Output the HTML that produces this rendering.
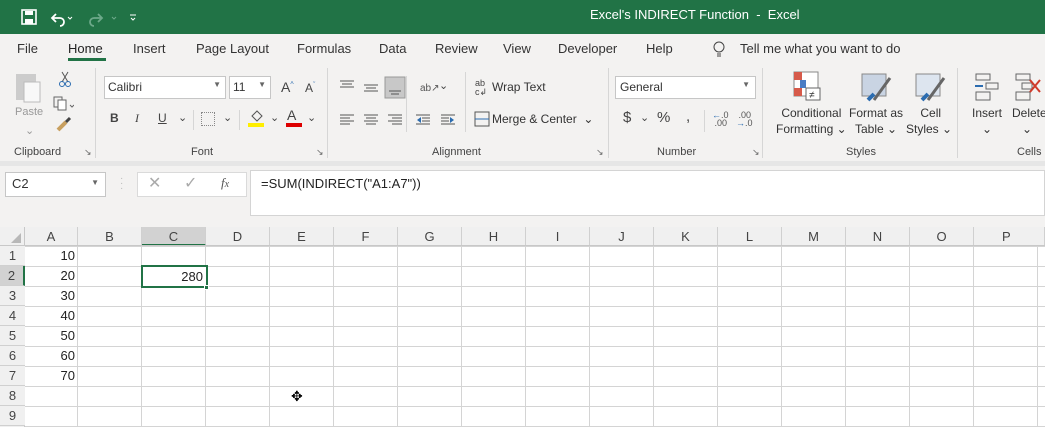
<!DOCTYPE html><html><head><meta charset="utf-8"><style>
*{margin:0;padding:0;box-sizing:border-box}
body{width:1045px;height:427px;overflow:hidden;background:#fff;font-family:"Segoe UI","Liberation Sans",sans-serif;position:relative;color:#333}
.a{position:absolute;white-space:nowrap}
.t{font-size:13px;color:#333}
.s{font-size:11px;color:#444}
.sep{position:absolute;width:1px;background:#d6d6d6}
.ch{position:absolute;top:227px;height:19px;font-size:13px;color:#444;text-align:center;line-height:19px;border-right:1px solid #d0d0d0;background:#f0f0f0}
.rh{position:absolute;left:0;width:25px;height:20px;font-size:13px;color:#444;text-align:center;line-height:20px;background:#f0f0f0;border-bottom:1px solid #d0d0d0}
.v{position:absolute;left:25px;width:53px;text-align:right;padding-right:3px;font-size:13px;color:#222;line-height:20px}
</style></head><body>
<div class="a" style="left:0;top:0;width:1045px;height:34px;background:#217346"></div>
<svg class="a" style="left:20px;top:9px" width="120" height="18"><rect x="2" y="1" width="14" height="14" fill="none" stroke="#fff" stroke-width="1.6"/><rect x="5" y="2" width="8" height="4" fill="#fff"/><rect x="5" y="10" width="8" height="5" fill="#fff"/><path d="M36 5 l-4 4 4 4 M32 9 h8 a4 4 0 0 1 0 8" fill="none" stroke="#fff" stroke-width="1.8"/><path d="M48 8 l2 2 2-2" stroke="#fff" fill="none"/><path d="M78 5 l4 4 -4 4 M82 9 h-8 a4 4 0 0 0 0 8" fill="none" stroke="#6da98a" stroke-width="1.8"/><path d="M92 8 l2 2 2-2" stroke="#6da98a" fill="none"/><path d="M110 6 h6 M111 9 l2 2 2-2" stroke="#fff" fill="none"/></svg>
<div class="a" style="left:590px;top:7px;font-size:13px;color:#fff">Excel's INDIRECT Function &nbsp;-&nbsp; Excel</div>
<div class="a" style="left:0;top:34px;width:1045px;height:127px;background:#f3f2f1"></div>
<div class="a" style="left:0;top:161px;width:1045px;height:5px;background:#e6e6e6"></div>
<div class="a t" style="left:17px;top:41px">File</div>
<div class="a t" style="left:68px;top:41px;color:#222">Home</div>
<div class="a" style="left:68px;top:58px;width:38px;height:3px;background:#217346"></div>
<div class="a t" style="left:133px;top:41px">Insert</div>
<div class="a t" style="left:196px;top:41px">Page Layout</div>
<div class="a t" style="left:297px;top:41px">Formulas</div>
<div class="a t" style="left:379px;top:41px">Data</div>
<div class="a t" style="left:435px;top:41px">Review</div>
<div class="a t" style="left:503px;top:41px">View</div>
<div class="a t" style="left:558px;top:41px">Developer</div>
<div class="a t" style="left:646px;top:41px">Help</div>
<svg class="a" style="left:712px;top:41px" width="14" height="18"><circle cx="7" cy="6" r="5" fill="none" stroke="#444"/><path d="M5 13h4M5 15h4" stroke="#444"/></svg>
<div class="a t" style="left:740px;top:41px">Tell me what you want to do</div>
<svg class="a" style="left:14px;top:70px" width="60" height="70"><rect x="2" y="4" width="20" height="26" fill="#ccc"/><rect x="10" y="12" width="16" height="20" fill="#f8f8f8" stroke="#bbb"/><path d="M48 2 l6 10 M54 2 l-6 10" stroke="#555"/><circle cx="48" cy="14" r="2.5" fill="none" stroke="#2b6cb0"/><circle cx="54" cy="14" r="2.5" fill="none" stroke="#2b6cb0"/><rect x="40" y="27" width="8" height="10" fill="none" stroke="#666"/><rect x="44" y="30" width="8" height="10" fill="#fff" stroke="#666"/><path d="M56 35 l2 2 2-2" stroke="#666" fill="none"/><path d="M44 60 l8-8" stroke="#c8a060" stroke-width="4"/><path d="M52 52 l4-4" stroke="#444" stroke-width="3"/></svg>
<div class="a s" style="left:15px;top:106px;color:#999">Paste</div>
<div class="a s" style="left:25px;top:124px;color:#999">⌄</div>
<div class="a s" style="left:14px;top:146px">Clipboard</div>
<div class="a" style="left:84px;top:147px;font-size:9px;color:#666">↘</div>
<div class="sep" style="left:95px;top:68px;height:90px"></div>
<div class="a" style="left:104px;top:76px;width:122px;height:23px;background:#fff;border:1px solid #c6c6c6;font-size:12px;padding:3px 3px">Calibri<span style="position:absolute;right:4px;font-size:8px;color:#666">▼</span></div>
<div class="a" style="left:229px;top:76px;width:42px;height:23px;background:#fff;border:1px solid #c6c6c6;font-size:12px;padding:3px 3px">11<span style="position:absolute;right:4px;font-size:8px;color:#666">▼</span></div>
<div class="a" style="left:281px;top:79px;font-size:14px;color:#444">A<sup style="font-size:7px;color:#2b6cb0">^</sup></div>
<div class="a" style="left:305px;top:81px;font-size:12px;color:#444">A<sup style="font-size:7px;color:#2b6cb0">ˇ</sup></div>
<div class="a" style="left:110px;top:111px;font-size:12px;font-weight:bold;color:#444">B</div>
<div class="a" style="left:135px;top:111px;font-size:12px;font-style:italic;color:#444;font-family:'Liberation Serif',serif">I</div>
<div class="a" style="left:158px;top:111px;font-size:12px;text-decoration:underline;color:#444">U</div>
<div class="a s" style="left:178px;top:111px">⌄</div>
<div class="sep" style="left:193px;top:110px;height:20px"></div>
<div class="a" style="left:201px;top:112px;width:14px;height:14px;border:1px dotted #888"></div>
<div class="a s" style="left:223px;top:111px">⌄</div>
<div class="sep" style="left:239px;top:110px;height:20px"></div>
<div class="a" style="left:248px;top:123px;width:16px;height:4px;background:#ffee00"></div>
<svg class="a" style="left:249px;top:109px" width="16" height="14"><path d="M3 7 l5-5 5 5 -5 5z" fill="none" stroke="#555"/></svg>
<div class="a s" style="left:270px;top:111px">⌄</div>
<div class="a" style="left:287px;top:107px;font-size:14px;color:#444">A</div>
<div class="a" style="left:286px;top:123px;width:16px;height:4px;background:#d00"></div>
<div class="a s" style="left:307px;top:111px">⌄</div>
<div class="a s" style="left:191px;top:146px">Font</div>
<div class="a" style="left:316px;top:147px;font-size:9px;color:#666">↘</div>
<div class="sep" style="left:327px;top:68px;height:90px"></div>
<svg class="a" style="left:338px;top:76px" width="270" height="55"><g stroke="#555"><path d="M2 5h14M4 8h10M2 11h14"/><path d="M26 9h14M28 12h10M26 15h14"/><rect x="47" y="1" width="20" height="21" fill="#c8c8c8" stroke="#999"/><path d="M51 15h12M53 18h8"/><path d="M2 39h14M2 42h10M2 45h14M2 48h10"/><path d="M26 39h14M28 42h10M26 45h14M28 48h10"/><path d="M50 39h14M54 42h10M50 45h14M54 48h10"/><path d="M78 39h14M84 42h8M84 45h8M78 48h14"/><path d="M103 39h14M103 42h8M103 45h8M103 48h14"/></g><path d="M79 44l4-3v6z" fill="#2b6cb0"/><path d="M116 44l-4-3v6z" fill="#2b6cb0"/><text x="82" y="15" font-size="10" fill="#555" font-family="Liberation Sans">ab↗</text><rect x="137" y="36" width="14" height="14" fill="none" stroke="#555"/><path d="M137 43h14" stroke="#2b6cb0"/><text x="137" y="10" font-size="9" fill="#444" font-family="Liberation Sans">ab</text><text x="137" y="19" font-size="9" fill="#444" font-family="Liberation Sans">c↲</text></svg>
<div class="sep" style="left:406px;top:76px;height:56px"></div>
<div class="a s" style="left:439px;top:79px">⌄</div>
<div class="sep" style="left:465px;top:72px;height:60px"></div>
<div class="a" style="left:492px;top:80px;font-size:12px;color:#333">Wrap Text</div>
<div class="a" style="left:492px;top:112px;font-size:12px;color:#333">Merge &amp; Center &nbsp;⌄</div>
<div class="a s" style="left:432px;top:146px">Alignment</div>
<div class="a" style="left:596px;top:147px;font-size:9px;color:#666">↘</div>
<div class="sep" style="left:608px;top:68px;height:90px"></div>
<div class="a" style="left:615px;top:76px;width:141px;height:23px;background:#fff;border:1px solid #c6c6c6;font-size:12px;padding:3px 4px">General<span style="position:absolute;right:5px;font-size:8px;color:#666">▼</span></div>
<div class="a" style="left:623px;top:109px;font-size:15px;color:#444">$</div>
<div class="a s" style="left:640px;top:111px">⌄</div>
<div class="a" style="left:657px;top:109px;font-size:15px;color:#444">%</div>
<div class="a" style="left:686px;top:108px;font-size:15px;color:#444">,</div>
<div class="sep" style="left:704px;top:110px;height:22px"></div>
<div class="a" style="left:712px;top:111px;font-size:9px;line-height:8px;color:#555"><span style="color:#2b6cb0">←</span>.0<br>&nbsp;.00</div>
<div class="a" style="left:736px;top:111px;font-size:9px;line-height:8px;color:#555">&nbsp;.00<br><span style="color:#2b6cb0">→</span>.0</div>
<div class="a s" style="left:657px;top:146px">Number</div>
<div class="a" style="left:752px;top:147px;font-size:9px;color:#666">↘</div>
<div class="sep" style="left:762px;top:68px;height:90px"></div>
<svg class="a" style="left:790px;top:70px" width="160" height="36"><rect x="4" y="2" width="24" height="24" fill="#fff" stroke="#888"/><rect x="4" y="2" width="8" height="8" fill="#d65a4a"/><rect x="10" y="10" width="6" height="8" fill="#4a7cc4"/><rect x="4" y="18" width="8" height="8" fill="#d65a4a"/><rect x="16" y="18" width="14" height="12" fill="#fff" stroke="#666"/><text x="19" y="28" font-size="10" fill="#333">≠</text><rect x="72" y="4" width="24" height="22" fill="#c9d4e3" stroke="#888"/><path d="M84 30 l16-22" stroke="#666" stroke-width="3"/><path d="M78 30 l6-6" stroke="#2b6cb0" stroke-width="4"/><rect x="126" y="4" width="24" height="22" fill="#dde5ef" stroke="#888"/><path d="M138 30 l16-22" stroke="#666" stroke-width="3"/><path d="M132 30 l6-6" stroke="#2b6cb0" stroke-width="4"/></svg>
<div class="a" style="left:776px;top:105px;font-size:12px;line-height:16px;text-align:center;color:#333">Conditional<br>Formatting ⌄</div>
<div class="a" style="left:849px;top:105px;font-size:12px;line-height:16px;text-align:center;color:#333">Format as<br>Table ⌄</div>
<div class="a" style="left:906px;top:105px;font-size:12px;line-height:16px;text-align:center;color:#333">&nbsp;Cell<br>Styles ⌄</div>
<div class="a s" style="left:846px;top:146px">Styles</div>
<div class="sep" style="left:957px;top:68px;height:90px"></div>
<svg class="a" style="left:972px;top:72px" width="73" height="30"><g fill="none" stroke="#666"><rect x="4" y="2" width="14" height="6"/><rect x="4" y="20" width="14" height="8"/><rect x="14" y="11" width="12" height="6"/><rect x="44" y="2" width="14" height="6"/><rect x="44" y="20" width="14" height="8"/><rect x="50" y="11" width="10" height="6"/></g><path d="M3 14h8" stroke="#2b6cb0" stroke-width="2"/><path d="M58 8l10 12M68 8l-10 12" stroke="#d03a2a" stroke-width="2"/></svg>
<div class="a" style="left:972px;top:105px;font-size:12px;line-height:16px;text-align:center;color:#333">Insert<br>⌄</div>
<div class="a" style="left:1012px;top:105px;font-size:12px;line-height:16px;color:#333">Delete<br>&nbsp;&nbsp;&nbsp;⌄</div>
<div class="a s" style="left:1017px;top:146px">Cells</div>
<div class="a" style="left:0;top:166px;width:1045px;height:61px;background:#f3f2f1"></div>
<div class="a" style="left:5px;top:172px;width:101px;height:25px;background:#fff;border:1px solid #c6c6c6;font-size:13px;padding:3px 6px">C2<span style="position:absolute;right:6px;top:5px;font-size:8px;color:#666">▼</span></div>
<div class="a" style="left:120px;top:176px;font-size:10px;color:#bbb;line-height:5px">·<br>·<br>·</div>
<div class="a" style="left:137px;top:172px;width:110px;height:25px;background:#fff;border:1px solid #dadada"></div>
<div class="a" style="left:148px;top:173px;font-size:16px;color:#aaa">✕</div>
<div class="a" style="left:184px;top:173px;font-size:16px;color:#aaa">✓</div>
<div class="a" style="left:221px;top:175px;font-size:13px;font-style:italic;color:#555;font-family:'Liberation Serif',serif">f<span style="font-size:10px">x</span></div>
<div class="a" style="left:250px;top:170px;width:795px;height:46px;background:#fff;border:1px solid #d4d4d4"></div>
<div class="a" style="left:261px;top:176px;font-size:13px;color:#222">=SUM(INDIRECT("A1:A7"))</div>
<div class="a" style="left:0;top:227px;width:1045px;height:200px;background:#fff;background-image:linear-gradient(#d4d4d4 1px,transparent 1px);background-size:100% 20px;background-position:0 19px"></div>
<div class="a" style="left:0;top:227px;width:25px;height:200px;background:#f0f0f0;border-right:1px solid #c8c8c8"></div>
<svg class="a" style="left:10px;top:232px" width="12" height="12"><path d="M11 1v10H1z" fill="#b8b8b8"/></svg>
<div class="ch" style="left:25px;width:53px">A</div>
<div class="ch" style="left:78px;width:64px">B</div>
<div class="ch" style="left:142px;width:64px;background:#d2d2d2;border-bottom:2px solid #217346">C</div>
<div class="ch" style="left:206px;width:64px">D</div>
<div class="ch" style="left:270px;width:64px">E</div>
<div class="ch" style="left:334px;width:64px">F</div>
<div class="ch" style="left:398px;width:64px">G</div>
<div class="ch" style="left:462px;width:64px">H</div>
<div class="ch" style="left:526px;width:64px">I</div>
<div class="ch" style="left:590px;width:64px">J</div>
<div class="ch" style="left:654px;width:64px">K</div>
<div class="ch" style="left:718px;width:64px">L</div>
<div class="ch" style="left:782px;width:64px">M</div>
<div class="ch" style="left:846px;width:64px">N</div>
<div class="ch" style="left:910px;width:64px">O</div>
<div class="ch" style="left:974px;width:71px;text-align:left;padding-left:28px">P</div>
<div class="a" style="left:0;top:245px;width:1045px;height:1px;background:#c8c8c8"></div>
<div class="a" style="left:77px;top:246px;width:1px;height:181px;background:#d4d4d4;box-shadow:64px 0 #d4d4d4,128px 0 #d4d4d4,192px 0 #d4d4d4,256px 0 #d4d4d4,320px 0 #d4d4d4,384px 0 #d4d4d4,448px 0 #d4d4d4,512px 0 #d4d4d4,576px 0 #d4d4d4,640px 0 #d4d4d4,704px 0 #d4d4d4,768px 0 #d4d4d4,832px 0 #d4d4d4,896px 0 #d4d4d4,960px 0 #d4d4d4"></div>
<div class="rh" style="top:246px">1</div>
<div class="rh" style="top:266px;background:#d2d2d2;border-right:2px solid #217346">2</div>
<div class="rh" style="top:286px">3</div>
<div class="rh" style="top:306px">4</div>
<div class="rh" style="top:326px">5</div>
<div class="rh" style="top:346px">6</div>
<div class="rh" style="top:366px">7</div>
<div class="rh" style="top:386px">8</div>
<div class="rh" style="top:406px">9</div>
<div class="v" style="top:246px">10</div>
<div class="v" style="top:266px">20</div>
<div class="v" style="top:286px">30</div>
<div class="v" style="top:306px">40</div>
<div class="v" style="top:326px">50</div>
<div class="v" style="top:346px">60</div>
<div class="v" style="top:366px">70</div>
<div class="a" style="left:141px;top:265px;width:67px;height:23px;border:2px solid #217346;background:#fff;font-size:13px;color:#222;text-align:right;padding-right:3px;line-height:19px">280</div>
<div class="a" style="left:204px;top:285px;width:5px;height:5px;background:#217346;border:1px solid #fff"></div>
<div class="a" style="left:291px;top:388px;font-size:14px;color:#000">✥</div>
</body></html>
